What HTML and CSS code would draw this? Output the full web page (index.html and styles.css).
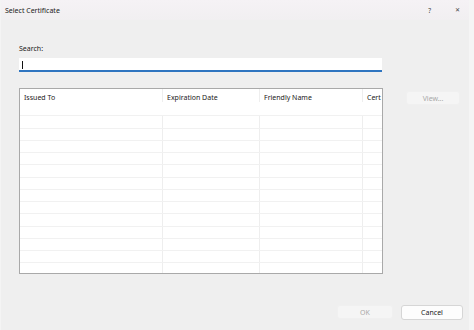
FILE: index.html
```html
<!DOCTYPE html>
<html lang="en">
<head>
    <meta charset="UTF-8">
    <meta name="viewport" content="width=device-width, initial-scale=1.0">
    <title>Select Certificate</title>
    <link rel="stylesheet" href="styles.css">
</head>
<body>
    <div class="dialog">
        <div class="titlebar">
            <span class="title">Select Certificate</span>
            <div class="title-buttons">
                <span class="help">?</span>
                <span class="close">&#x2715;</span>
            </div>
        </div>
        <div class="content">
            <label class="search-label" for="search">Search:</label>
            <div class="search-box">
                <span class="caret"></span>
                <input type="text" id="search">
            </div>
            <div class="list-area">
                <div class="cert-list">
                    <div class="list-row list-header">
                        <div class="cell">Issued To</div>
                        <div class="cell">Expiration Date</div>
                        <div class="cell">Friendly Name</div>
                        <div class="cell">Cert</div>
                    </div>
                    <div class="list-row"><div class="cell"></div><div class="cell"></div><div class="cell"></div><div class="cell"></div></div>
                    <div class="list-row"><div class="cell"></div><div class="cell"></div><div class="cell"></div><div class="cell"></div></div>
                    <div class="list-row"><div class="cell"></div><div class="cell"></div><div class="cell"></div><div class="cell"></div></div>
                    <div class="list-row"><div class="cell"></div><div class="cell"></div><div class="cell"></div><div class="cell"></div></div>
                    <div class="list-row"><div class="cell"></div><div class="cell"></div><div class="cell"></div><div class="cell"></div></div>
                    <div class="list-row"><div class="cell"></div><div class="cell"></div><div class="cell"></div><div class="cell"></div></div>
                    <div class="list-row"><div class="cell"></div><div class="cell"></div><div class="cell"></div><div class="cell"></div></div>
                    <div class="list-row"><div class="cell"></div><div class="cell"></div><div class="cell"></div><div class="cell"></div></div>
                    <div class="list-row"><div class="cell"></div><div class="cell"></div><div class="cell"></div><div class="cell"></div></div>
                    <div class="list-row"><div class="cell"></div><div class="cell"></div><div class="cell"></div><div class="cell"></div></div>
                    <div class="list-row"><div class="cell"></div><div class="cell"></div><div class="cell"></div><div class="cell"></div></div>
                    <div class="list-row"><div class="cell"></div><div class="cell"></div><div class="cell"></div><div class="cell"></div></div>
                    <div class="list-row"><div class="cell"></div><div class="cell"></div><div class="cell"></div><div class="cell"></div></div>
                    <div class="list-row list-fill"><div class="cell"></div><div class="cell"></div><div class="cell"></div><div class="cell"></div></div>
                </div>
                <button class="btn btn-view" disabled>View...</button>
            </div>
        </div>
        <div class="footer">
            <button class="btn btn-ok" disabled>OK</button>
            <button class="btn btn-cancel">Cancel</button>
        </div>
    </div>
</body>
</html>
```

FILE: styles.css
```css
* {
    box-sizing: border-box;
    margin: 0;
    padding: 0;
    font-family: "Noto Sans", "Open Sans", sans-serif;
}

body {
    width: 474px;
    height: 330px;
    background-color: #f5f5f5;
    overflow: hidden;
}

.dialog {
    width: 469px;
    height: 330px;
    display: flex;
    flex-direction: column;
    background-color: #efefef;
    border-left: 1px solid #f4f4f4;
}

.titlebar {
    height: 20px;
    display: flex;
    justify-content: space-between;
    align-items: center;
    padding-left: 4px;
    background: linear-gradient(#f5f2f5, #f1eff1);
    font-size: 7px;
    color: #1a1a1a;
}

.title-buttons {
    display: flex;
    gap: 24px;
    padding-right: 9px;
    color: #444;
}

.help {
    font-size: 6.5px;
}

.close {
    font-size: 6px;
}

.content {
    padding: 24px 0 0 18px;
    font-size: 7px;
    color: #1a1a1a;
}

.search-label {
    display: block;
    height: 10px;
    line-height: 10px;
}

.search-box {
    position: relative;
    width: 363px;
    height: 14px;
    margin-top: 4px;
    background-color: #fff;
    border-bottom: 2px solid #2f75c0;
}

.search-box input {
    width: 100%;
    height: 100%;
    border: none;
    outline: none;
    background: transparent;
}

.caret {
    position: absolute;
    left: 3px;
    top: 3px;
    width: 1px;
    height: 8px;
    background-color: #111;
}

.list-area {
    display: flex;
    align-items: flex-start;
    gap: 23px;
    margin-top: 16px;
}

.cert-list {
    width: 364px;
    height: 186px;
    background-color: #fff;
    border: 1px solid #a9a9a9;
    overflow: hidden;
}

.list-row {
    display: grid;
    grid-template-columns: 143px 97px 103px 1fr;
    height: 12.25px;
    border-bottom: 1px solid #f1f1f1;
}

.list-header {
    height: 27.25px;
    align-items: start;
}

.list-fill {
    height: 20px;
    border-bottom: none;
}

.cell {
    border-right: 1px solid #eeeeee;
    padding: 4px 0 0 4px;
    white-space: nowrap;
    overflow: hidden;
    line-height: 9px;
}

.cell:last-child {
    border-right: none;
}

.btn {
    font-size: 7px;
    border-radius: 3px;
    height: 14px;
    border: 1px solid #d6d6d6;
    background-color: #fdfdfd;
    color: #1a1a1a;
}

.btn:disabled {
    border-color: #f0f0f0;
    background-color: #f5f5f5;
    color: #a8a8a8;
}

.btn-view {
    width: 54px;
    margin-top: 3px;
}

.footer {
    margin-top: auto;
    display: flex;
    justify-content: flex-end;
    gap: 8px;
    padding: 0 6px 10px 0;
}

.btn-ok {
    width: 56px;
}

.btn-cancel {
    width: 62px;
    height: 15px;
}
```
